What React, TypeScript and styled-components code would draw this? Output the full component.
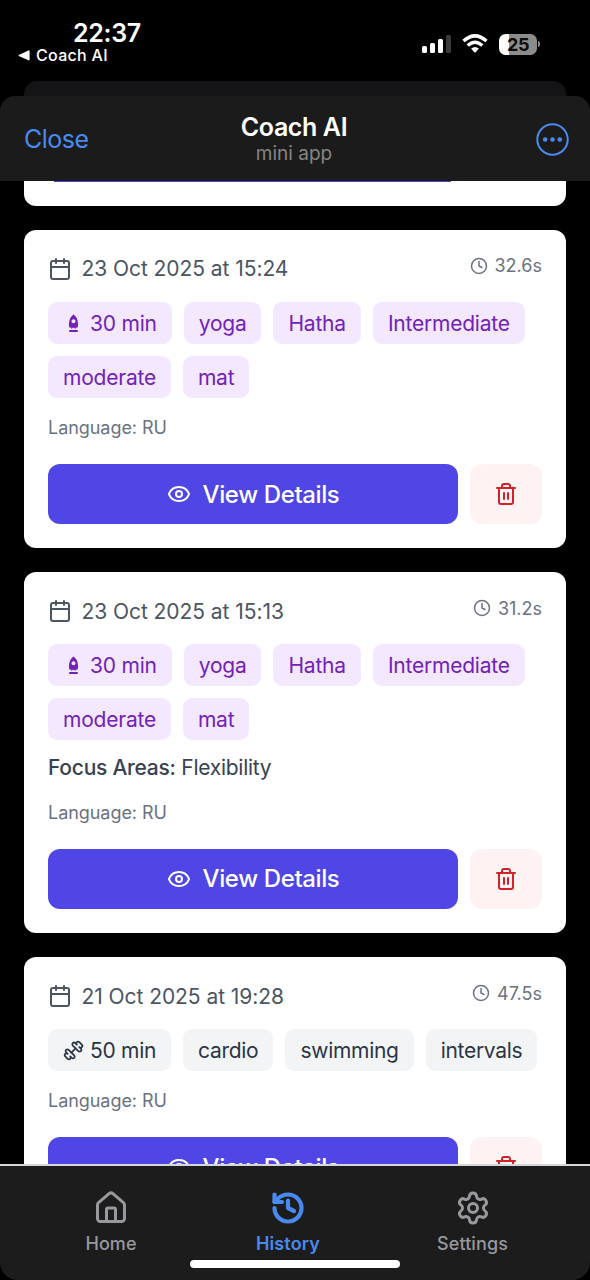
import React from "react";
import styled, { createGlobalStyle } from "styled-components";
import { Calendar, Clock, Eye, Trash2, House, History, Settings } from "lucide-react";

const Global = createGlobalStyle`
  * { box-sizing: border-box; }
  body { margin: 0; background: #000; font-family: Inter, "Liberation Sans", sans-serif; -webkit-font-smoothing: antialiased; }
  button { font: inherit; border: 0; padding: 0; background: none; }
`;

const Phone = styled.div`
  width: 590px;
  height: 1280px;
  display: flex;
  flex-direction: column;
  overflow: hidden;
  background: #000;
`;

const StatusBar = styled.div`
  height: 81px;
  flex: none;
  display: flex;
  justify-content: space-between;
  padding: 18px 50px 0 18px;
  color: #fff;
`;

const StatusLeft = styled.div`
  display: flex;
  flex-direction: column;
`;

const Time = styled.div`
  margin-left: 55px;
  height: 27px;
  line-height: 30px;
  font-size: 25px;
  font-weight: 600;
  letter-spacing: -0.3px;
  white-space: nowrap;
`;

const BackApp = styled.div`
  display: flex;
  align-items: center;
  gap: 6px;
  height: 20px;
  font-size: 16px;
  font-weight: 500;
  letter-spacing: 0.3px;
  white-space: nowrap;
`;

const StatusRight = styled.div`
  display: flex;
  align-items: center;
  height: 52px;
`;

const BackSheet = styled.div`
  flex: none;
  height: 15px;
  margin: 0 24px;
  border-radius: 13px 13px 0 0;
  background: #141416;
`;

const Header = styled.header`
  flex: none;
  height: 85px;
  display: grid;
  grid-template-columns: 140px 1fr 143px;
  align-items: center;
  padding: 0 21px 0 24px;
  border-radius: 15px 15px 0 0;
  background: #1b1b1b;
  color: #4a8af0;
`;

const CloseButton = styled.button`
  justify-self: start;
  color: inherit;
  font-size: 25px;
  letter-spacing: -0.5px;
`;

const Titles = styled.div`
  text-align: center;
  padding-top: 2px;
  padding-right: 2px;
`;

const Title = styled.div`
  font-size: 25px;
  line-height: 28px;
  font-weight: 600;
  letter-spacing: -0.4px;
  color: #fff;
`;

const Subtitle = styled.div`
  font-size: 19px;
  line-height: 25px;
  color: #858585;
`;

const MoreButton = styled.button`
  justify-self: end;
  display: flex;
  color: inherit;
  padding-top: 2px;
`;

const List = styled.main`
  flex: 1;
  min-height: 0;
  overflow: hidden;
  display: flex;
  flex-direction: column;
  gap: 24px;
  padding: 0 24px;
`;

const Card = styled.article<{ $height: number }>`
  flex: none;
  height: ${(p) => p.$height}px;
  padding: 24px;
  border-radius: 12px;
  background: #fff;
`;

const CardTail = styled.div`
  flex: none;
  height: 24.5px;
  padding: 0 115px 0 30px;
  border-radius: 0 0 12px 12px;
  background: #fff;
`;

const TailEdge = styled.div`
  height: 1px;
  background: #4a42d0;
`;

const CardHead = styled.div<{ $height: number }>`
  display: flex;
  justify-content: space-between;
  height: ${(p) => p.$height}px;
`;

const DateLine = styled.div`
  display: flex;
  align-items: center;
  gap: 9.5px;
  height: 30px;
  color: #4b5563;
  font-size: 21px;
  letter-spacing: -0.06px;
  white-space: nowrap;
`;

const Duration = styled.div`
  display: flex;
  align-items: center;
  gap: 7px;
  height: 24px;
  color: #6b7280;
  font-size: 18px;
  white-space: nowrap;
`;

const Tags = styled.div`
  display: flex;
  flex-wrap: wrap;
  gap: 12px;
  margin-top: 18px;
`;

const Tag = styled.span<{ $tone: "purple" | "gray" }>`
  display: flex;
  align-items: center;
  gap: 6px;
  height: 42px;
  padding: 0 15px;
  border-radius: 9px;
  font-size: 21px;
  letter-spacing: ${(p) => (p.$tone === "purple" ? -0.22 : -0.29)}px;
  white-space: nowrap;
  color: ${(p) => (p.$tone === "purple" ? "#7222b6" : "#2b3544")};
  background: ${(p) => (p.$tone === "purple" ? "#f3e8ff" : "#f3f4f6")};
`;

const Focus = styled.div`
  margin-top: 12.5px;
  height: 30px;
  line-height: 30px;
  font-size: 21px;
  letter-spacing: -0.26px;
  color: #374151;
  strong { font-weight: 500; }
`;

const Language = styled.div`
  margin-top: 18px;
  height: 24px;
  line-height: 24px;
  font-size: 18px;
  letter-spacing: -0.05px;
  color: #6b7280;
`;

const Actions = styled.div`
  display: flex;
  gap: 12px;
  margin-top: 24px;
`;

const ViewButton = styled.button`
  flex: 1;
  display: flex;
  align-items: center;
  justify-content: center;
  gap: 12px;
  height: 60px;
  border-radius: 12px;
  background: #4f46e5;
  color: #fff;
  font-size: 24px;
  font-weight: 500;
  letter-spacing: -0.38px;
`;

const DeleteButton = styled.button`
  width: 72px;
  height: 60px;
  display: flex;
  align-items: center;
  justify-content: center;
  border-radius: 12px;
  background: #fef2f2;
  color: #d02228;
`;

const TabArea = styled.nav`
  flex: none;
  height: 116px;
  display: flex;
  flex-direction: column;
  align-items: center;
  border-top: 2px solid #d5d6da;
  background: #000;
`;

const TabPanel = styled.div`
  width: 100%;
  height: 114px;
  display: flex;
  flex-direction: column;
  align-items: center;
  border-radius: 0 0 18px 18px;
  background: #1c1c1d;
`;

const Tabs = styled.div`
  width: 100%;
  height: 94px;
  display: grid;
  grid-template-columns: 174px 180px 189px;
  padding-left: 24px;
`;

const Tab = styled.button<{ $active?: boolean }>`
  display: flex;
  flex-direction: column;
  align-items: center;
  padding-top: 24px;
  gap: 6px;
  color: ${(p) => (p.$active ? "#4a8af0" : "#98989d")};
  font-size: 18px;
  line-height: 24px;
  letter-spacing: ${(p) => (p.$active ? 0.15 : 0.1)}px;
  font-weight: ${(p) => (p.$active ? 600 : 500)};
`;

const HomeIndicator = styled.div`
  width: 210px;
  height: 8px;
  border-radius: 4px;
  background: #fff;
`;

const SignalIcon = () => (
  <svg width="30" height="20" viewBox="0 0 30 20" fill="#fff">
    <rect x="0" y="12" width="5" height="7" rx="1.5" />
    <rect x="8" y="9" width="5" height="10" rx="1.5" />
    <rect x="16" y="5" width="5" height="14" rx="1.5" />
    <rect x="24" y="1" width="5" height="18" rx="1.5" fill="#3b3b3d" />
  </svg>
);

const Wifi = styled.svg`
  margin-left: 10px;
`;

const WifiIcon = () => (
  <Wifi width="26" height="20" viewBox="0 0 26 20">
    <g fill="none" stroke="#fff" strokeWidth="3.4">
      <path d="M1.5 7.1 Q13 -3.3 24.5 7.1" />
      <path d="M5.7 11.5 Q13 4.9 20.3 11.5" />
    </g>
    <path d="M9.1 14.6 Q13 11.4 16.9 14.6 L13.7 18.2 Q13 19 12.3 18.2 Z" fill="#fff" />
  </Wifi>
);

const BatteryBody = styled.div`
  margin-left: 11px;
  width: 38px;
  height: 21px;
  border-radius: 6.5px;
  background: linear-gradient(90deg, #fff 10px, #8c8c8c 10px);
  color: #0b0b0b;
  font-size: 18px;
  line-height: 21px;
  font-weight: 700;
  text-align: center;
  letter-spacing: -0.4px;
`;

const BatteryTip = styled.div`
  width: 2px;
  height: 6px;
  margin-left: 1px;
  border-radius: 0 3px 3px 0;
  background: #8c8c8c;
`;

const MoreIcon = () => (
  <svg width="33" height="33" viewBox="0 0 33 33" fill="currentColor">
    <circle cx="16.5" cy="16.5" r="15.2" fill="none" stroke="currentColor" strokeWidth="2" />
    <circle cx="9.2" cy="16.5" r="2.3" />
    <circle cx="16.5" cy="16.5" r="2.3" />
    <circle cx="23.8" cy="16.5" r="2.3" />
  </svg>
);

const RocketIcon = () => (
  <svg width="21" height="21" viewBox="0 0 21 21" fill="currentColor">
    <path
      fillRule="evenodd"
      d="M10.5 1.4 C13.4 3.8 14.8 6.6 14.9 9.4 Q15.6 12.4 14.5 14.8 L12.9 14.4 L12.3 16.2 L11.2 14.8 L9.8 14.8 L8.7 16.2 L8.1 14.4 L6.5 14.8 Q5.4 12.4 6.1 9.4 C6.2 6.6 7.6 3.8 10.5 1.4 Z M10.5 6.3 a2 2 0 1 0 0.01 0 Z"
    />
    <rect x="6" y="17.1" width="9" height="1.9" rx="0.9" />
  </svg>
);

const DumbbellIcon = () => (
  <svg
    width="21"
    height="21"
    viewBox="0 0 24 24"
    fill="none"
    stroke="currentColor"
    strokeWidth="2"
    strokeLinecap="round"
    strokeLinejoin="round"
  >
    <g transform="rotate(90 12 12)">
      <path d="M14.4 14.4 9.6 9.6" />
      <path d="M18.657 21.485a2 2 0 1 1-2.829-2.828l-1.767 1.768a2 2 0 1 1-2.829-2.829l6.364-6.364a2 2 0 1 1 2.829 2.829l-1.768 1.767a2 2 0 1 1 2.828 2.829z" />
      <path d="M5.343 2.515a2 2 0 1 1 2.829 2.828l1.767-1.768a2 2 0 1 1 2.829 2.829l-6.364 6.364a2 2 0 1 1-2.829-2.829l1.768-1.767a2 2 0 1 1-2.828-2.829z" />
    </g>
  </svg>
);

type Workout = {
  date: string;
  seconds: string;
  tone: "purple" | "gray";
  tags: string[];
  focus?: string;
  height: number;
  headHeight: number;
};

const workouts: Workout[] = [
  { date: "23 Oct 2025 at 15:24", seconds: "32.6s", tone: "purple", tags: ["30 min", "yoga", "Hatha", "Intermediate", "moderate", "mat"], height: 318.5, headHeight: 30.5 },
  { date: "23 Oct 2025 at 15:13", seconds: "31.2s", tone: "purple", tags: ["30 min", "yoga", "Hatha", "Intermediate", "moderate", "mat"], focus: "Flexibility", height: 361, headHeight: 30 },
  { date: "21 Oct 2025 at 19:28", seconds: "47.5s", tone: "gray", tags: ["50 min", "cardio", "swimming", "intervals"], height: 264, headHeight: 30 },
];

const WorkoutCard = ({ w }: { w: Workout }) => (
  <Card $height={w.height}>
    <CardHead $height={w.headHeight}>
      <DateLine>
        <Calendar size={24} strokeWidth={2} />
        {w.date}
      </DateLine>
      <Duration>
        <Clock size={18} strokeWidth={2} />
        {w.seconds}
      </Duration>
    </CardHead>
    <Tags>
      {w.tags.map((t, i) => (
        <Tag key={t} $tone={w.tone}>
          {i === 0 && (w.tone === "purple" ? <RocketIcon /> : <DumbbellIcon />)}
          {t}
        </Tag>
      ))}
    </Tags>
    {w.focus && (
      <Focus>
        <strong>Focus Areas:</strong> {w.focus}
      </Focus>
    )}
    <Language>Language: RU</Language>
    <Actions>
      <ViewButton>
        <Eye size={24} strokeWidth={2} />
        View Details
      </ViewButton>
      <DeleteButton aria-label="Delete">
        <Trash2 size={24} strokeWidth={2} />
      </DeleteButton>
    </Actions>
  </Card>
);

export default function App() {
  return (
    <Phone>
      <Global />
      <StatusBar>
        <StatusLeft>
          <Time>22:37</Time>
          <BackApp>
            <svg width="12" height="11" viewBox="0 0 12 11" fill="#fff">
              <path d="M0.8 5 L10.4 0.4 Q11.6 0 11.6 1.2 V9.6 Q11.6 10.8 10.4 10.3 L0.8 6 Q0.2 5.5 0.8 5 Z" />
            </svg>
            Coach AI
          </BackApp>
        </StatusLeft>
        <StatusRight>
          <SignalIcon />
          <WifiIcon />
          <BatteryBody>25</BatteryBody>
          <BatteryTip />
        </StatusRight>
      </StatusBar>
      <BackSheet />
      <Header>
        <CloseButton>Close</CloseButton>
        <Titles>
          <Title>Coach AI</Title>
          <Subtitle>mini app</Subtitle>
        </Titles>
        <MoreButton aria-label="More">
          <MoreIcon />
        </MoreButton>
      </Header>
      <List>
        <CardTail>
          <TailEdge />
        </CardTail>
        {workouts.map((w) => (
          <WorkoutCard key={w.date} w={w} />
        ))}
      </List>
      <TabArea>
        <TabPanel>
          <Tabs>
            <Tab>
              <House size={36} strokeWidth={2} />
              Home
            </Tab>
            <Tab $active>
              <History size={36} strokeWidth={2.8} />
              History
            </Tab>
            <Tab>
              <Settings size={36} strokeWidth={2} />
              Settings
            </Tab>
          </Tabs>
          <HomeIndicator />
        </TabPanel>
      </TabArea>
    </Phone>
  );
}
